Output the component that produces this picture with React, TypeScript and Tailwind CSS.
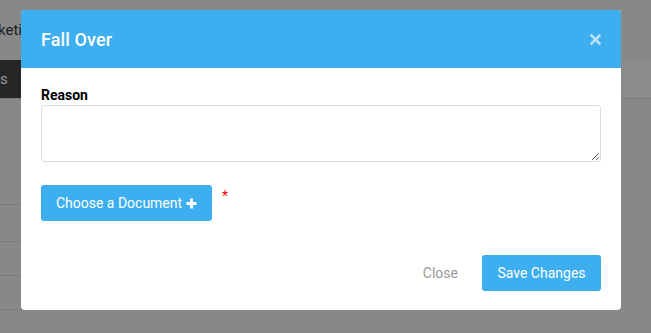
import React from "react";

export default function App() {
  return (
    <div
      className="relative w-[651px] h-[333px] overflow-hidden bg-[#888888]"
      style={{ fontFamily: "Roboto, 'Liberation Sans', sans-serif" }}
    >
      {/* dimmed page behind overlay */}
      <div className="absolute inset-0 flex flex-col">
        <div className="h-[60px] flex items-center">
          <span className="text-[15px] text-[#1c1c1c] -ml-[2px] mt-[1px]">keting</span>
        </div>
        <div className="h-[39px] flex border-b border-[#7b7b7b]">
          <div className="w-[200px] bg-[#262626] flex items-center">
            <span className="text-[15px] text-[#9a9a9a] ml-[0px]">s</span>
          </div>
          <div className="flex-1 bg-[#8c8c8c]" />
        </div>
        <div className="h-[106px] border-b border-[#7b7b7b] w-[200px]" />
        <div className="h-[37px] border-b border-[#7b7b7b] w-[200px]" />
        <div className="h-[34px] border-b border-[#7b7b7b] w-[200px]" />
        <div className="h-[34px] border-b border-[#7b7b7b] w-[200px]" />
      </div>

      {/* modal */}
      <div className="absolute left-[21px] top-[10px] w-[600px] h-[300px] rounded-[4px] bg-white overflow-hidden flex flex-col">
        <div className="h-[58px] bg-[#3daef0] flex items-center justify-between pl-5 pr-[20px]">
          <span className="text-[18px] font-medium text-white tracking-[0.1px]">Fall Over</span>
          <svg width="11" height="11" viewBox="0 0 11 11">
            <path d="M1.5 1.5 L9.5 9.5 M9.5 1.5 L1.5 9.5" stroke="#b9e2fa" strokeWidth="2.6" strokeLinecap="square" />
          </svg>
        </div>
        <div className="flex-1 flex flex-col px-5 pt-[19px]">
          <label className="text-[14px] font-bold text-black leading-[16px]">Reason</label>
          <textarea className="mt-[2px] h-[57px] w-full border border-[#dddddd] rounded-[3px] resize-y outline-none" />
          <div className="mt-[23px] flex items-start">
            <button className="h-[36px] w-[171px] bg-[#3daef0] rounded-[3px] text-white text-[14px] flex items-center justify-center gap-[4px]">
              <span>Choose a Document</span>
              <svg width="11" height="11" viewBox="0 0 11 11">
                <path d="M5.5 0.5 V10.5 M0.5 5.5 H10.5" stroke="white" strokeWidth="3" />
              </svg>
            </button>
            <span className="ml-[10px] mt-[3px] text-[#ff0000] text-[14px] leading-[16px]">*</span>
          </div>
          <div className="mt-[34px] flex items-center justify-end">
            <span className="text-[14px] text-[#999999] mr-[24px]">Close</span>
            <button className="h-[36px] w-[119px] bg-[#3daef0] rounded-[3px] text-white text-[14px]">
              Save Changes
            </button>
          </div>
        </div>
      </div>
    </div>
  );
}
